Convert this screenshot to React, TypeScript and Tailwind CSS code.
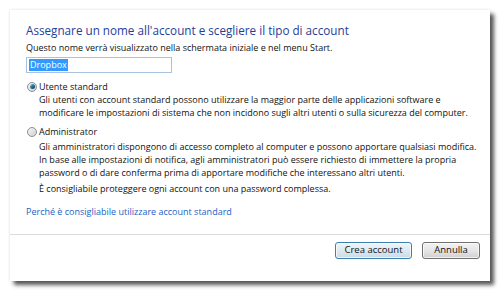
import React from "react";

const font = { fontFamily: '"Open Sans", "Liberation Sans", sans-serif' };

function Radio({ checked }: { checked?: boolean }) {
  return (
    <span className="ml-[1px] mr-[2px] flex h-[10px] w-[10px] shrink-0 items-center justify-center rounded-full border border-[#8e8f8f] bg-gradient-to-br from-[#f6f6f6] to-[#cfcfcf]">
      {checked && (
        <span className="h-[5px] w-[5px] rounded-full bg-gradient-to-br from-[#8fd0e2] via-[#1f6f94] to-[#0d3c5c]" />
      )}
    </span>
  );
}

export default function App() {
  return (
    <div className="min-h-[293px] w-[501px] bg-white p-[10px]" style={font}>
      <div className="flex h-[271px] w-[480px] flex-col bg-white shadow-[4px_4px_4px_rgba(0,0,0,0.65),0_0_3px_rgba(0,0,0,0.12)]">
        <div className="flex-1 pl-[16px] pt-[12px] text-[9px] leading-[13px] text-[#111]">
          <div className="whitespace-nowrap text-[11.7px] leading-[16px] text-[#1e4099]">
            Assegnare un nome all'account e scegliere il tipo di account
          </div>
          <div className="mt-[3px] whitespace-nowrap">
            Questo nome verrà visualizzato nella schermata iniziale e nel menu Start.
          </div>
          <div className="mt-[3px] flex h-[16px] w-[146px] items-center border border-[#a9c3df] bg-white pl-[2px]">
            <span className="bg-[#3399ff] px-[1px] leading-[12px] text-white">Dropbox</span>
          </div>

          <div className="mt-[7px] flex items-center">
            <Radio checked />
            <span>Utente standard</span>
          </div>
          <div className="pl-[13px] whitespace-nowrap">
            <div>Gli utenti con account standard possono utilizzare la maggior parte delle applicazioni software e</div>
            <div>modificare le impostazioni di sistema che non incidono sugli altri utenti o sulla sicurezza del computer.</div>
          </div>

          <div className="mt-[6px] flex items-center">
            <Radio />
            <span>Administrator</span>
          </div>
          <div className="mt-[2px] pl-[13px] whitespace-nowrap">
            <div>Gli amministratori dispongono di accesso completo al computer e possono apportare qualsiasi modifica.</div>
            <div>In base alle impostazioni di notifica, agli amministratori può essere richiesto di immettere la propria</div>
            <div>password o di dare conferma prima di apportare modifiche che interessano altri utenti.</div>
            <div className="mt-[3px]">È consigliabile proteggere ogni account con una password complessa.</div>
          </div>

          <div className="mt-[10px] whitespace-nowrap text-[#1a62c4]">
            Perché è consigliabile utilizzare account standard
          </div>
        </div>

        <div className="flex h-[47px] items-start justify-end gap-[10px] border-t border-[#dcdcdc] pr-[10px] pt-[7px] text-[9.5px] text-[#111]">
          <button className="flex h-[17px] w-[77px] items-center justify-center rounded-[3px] border border-[#3c7fb1] bg-gradient-to-b from-[#f0f6fa] via-[#dde9f1] to-[#c9dbe8] shadow-[inset_0_0_0_1px_rgba(255,255,255,0.7)]">
            Crea account
          </button>
          <button className="flex h-[17px] w-[58px] items-center justify-center rounded-[3px] border border-[#707070] bg-gradient-to-b from-[#f2f2f2] via-[#e6e6e6] to-[#d0d0d0] shadow-[inset_0_0_0_1px_rgba(255,255,255,0.7)]">
            Annulla
          </button>
        </div>
      </div>
    </div>
  );
}
